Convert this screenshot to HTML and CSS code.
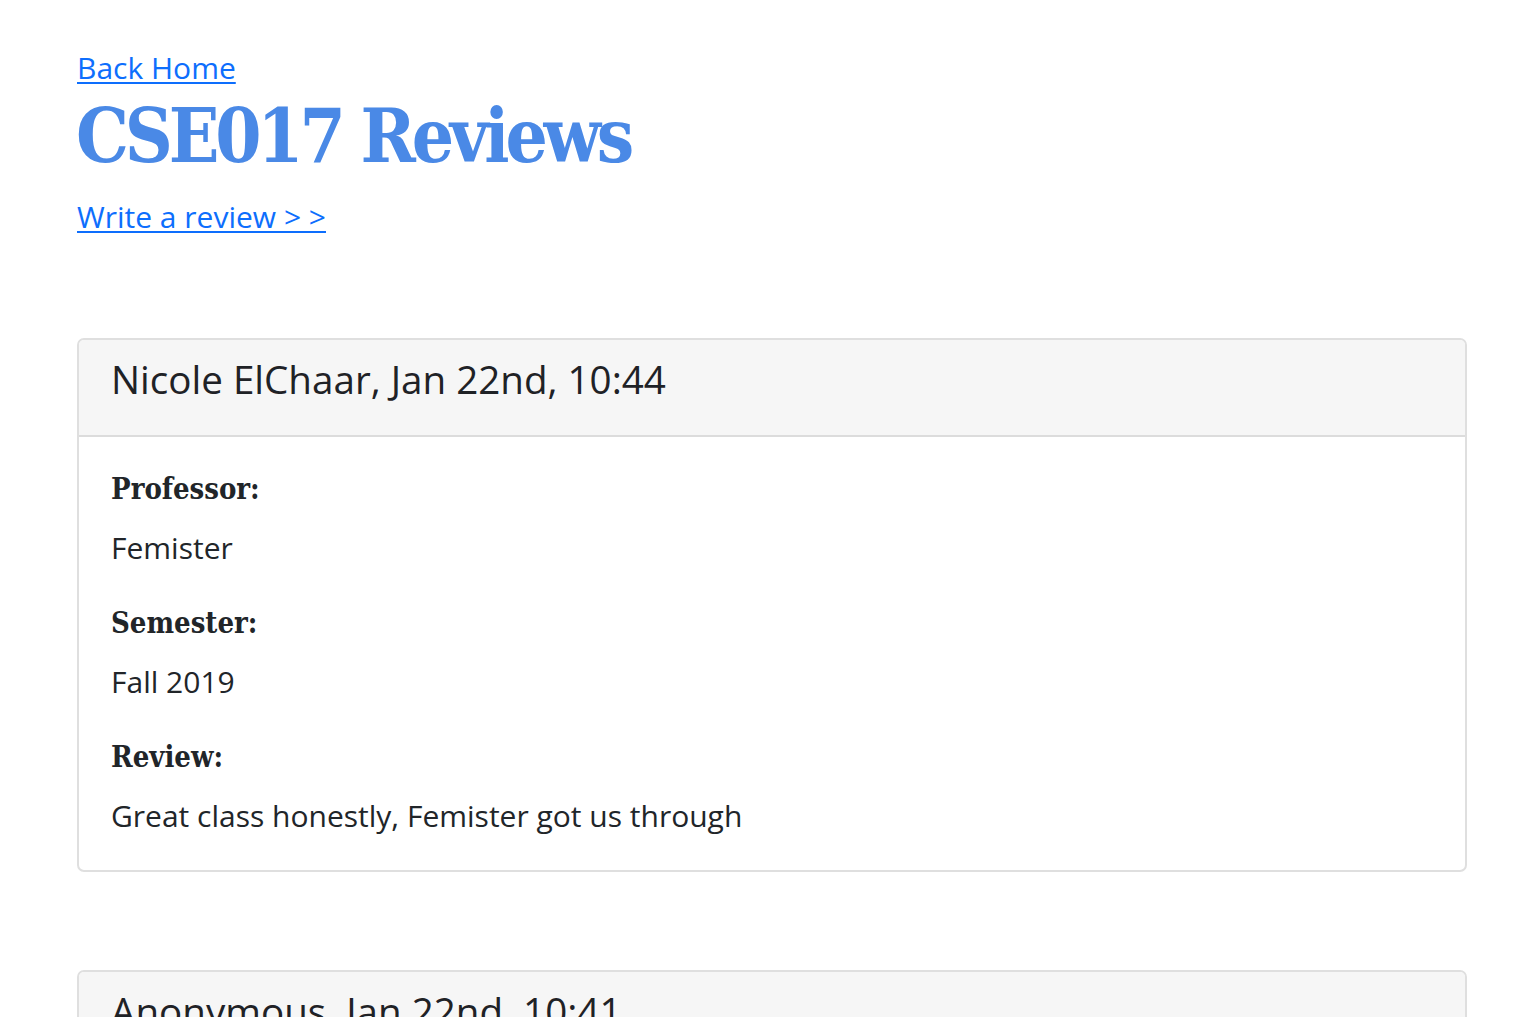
FILE: index.html
```html
<!DOCTYPE html>
<html lang="en">
<head>
<meta charset="utf-8">
<title>CSE017 Reviews</title>
<link rel="stylesheet" href="styles.css">
</head>
<body>
<main class="container">
  <div class="back"><a class="link" href="#">Back Home</a></div>
  <h1 class="title">CSE017 Reviews</h1>
  <p class="write"><a class="link" href="#">Write a review &gt; &gt;</a></p>

  <section class="card">
    <header class="card-header">Nicole ElChaar, Jan 22nd, 10:44</header>
    <div class="card-body">
      <h5 class="label">Professor:</h5>
      <p class="value">Femister</p>
      <h5 class="label">Semester:</h5>
      <p class="value">Fall 2019</p>
      <h5 class="label">Review:</h5>
      <p class="value">Great class honestly, Femister got us through</p>
    </div>
  </section>

  <section class="card">
    <header class="card-header">Anonymous, Jan 22nd, 10:41</header>
    <div class="card-body">
      <h5 class="label">Professor:</h5>
      <p class="value">Femister</p>
    </div>
  </section>
</main>
</body>
</html>
```

FILE: styles.css
```css
html, body {
  margin: 0;
  padding: 0;
  background: #ffffff;
}
body {
  font-family: "Open Sans", "Noto Sans", sans-serif;
  font-size: 30px;
  line-height: 45px;
  color: #212529;
}
.container {
  width: 1390px;
  padding: 45px 0 0 77px;
}
.link {
  color: #0d6efd;
  text-decoration: underline;
  text-decoration-thickness: 2px;
  text-underline-offset: 3px;
}
.back {
  margin: 0;
}
.title {
  font-family: "DejaVu Serif Condensed", "DejaVu Serif", serif;
  font-stretch: condensed;
  font-weight: 700;
  font-size: 74px;
  line-height: 88px;
  color: #4a89e6;
  margin: 2px 0 14px -1px;
  letter-spacing: -4.2px;
}
.write {
  margin: 0 0 99px;
}
.card {
  border: 2px solid #dfdfdf;
  border-radius: 7px;
  margin-bottom: 98px;
  overflow: hidden;
}
.card-header {
  background: #f6f6f6;
  border-bottom: 2px solid #dcdcdc;
  padding: 16px 32px 32px;
  font-size: 38.6px;
  line-height: 47px;
  font-weight: 500;
  color: #1f2226;
}
.card-body {
  padding: 35px 32px 32px;
}
.label {
  font-family: "DejaVu Serif Condensed", "DejaVu Serif", serif;
  font-stretch: condensed;
  font-weight: 700;
  font-size: 29px;
  line-height: 35px;
  margin: 0 0 18px;
}
.value {
  margin: 0 0 36px;
}
.value:last-child {
  margin-bottom: 0;
}
```
